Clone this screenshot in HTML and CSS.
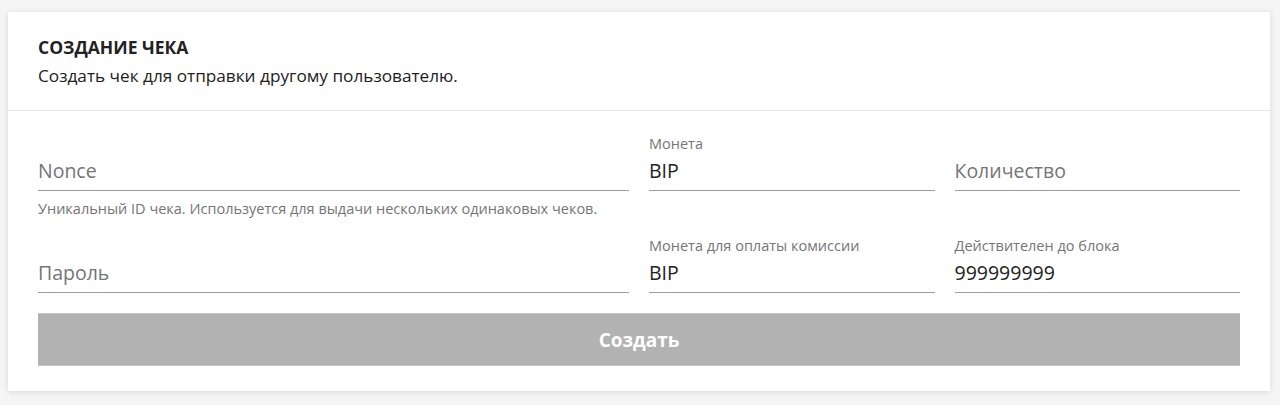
FILE: index.html
```html
<!DOCTYPE html>
<html lang="ru">
<head>
<meta charset="utf-8">
<title>Создание чека</title>
<link rel="stylesheet" href="styles.css">
</head>
<body>
<div class="card">
  <div class="card-head">
    <h1 class="title">СОЗДАНИЕ ЧЕКА</h1>
    <p class="subtitle">Создать чек для отправки другому пользователю.</p>
  </div>
  <div class="card-body">
    <div class="cell">
      <div class="field">
        <div class="label"></div>
        <div class="input placeholder">Nonce</div>
      </div>
      <div class="help">Уникальный ID чека. Используется для выдачи нескольких одинаковых чеков.</div>
    </div>
    <div class="cell">
      <div class="field">
        <div class="label">Монета</div>
        <div class="input">BIP</div>
      </div>
    </div>
    <div class="cell">
      <div class="field">
        <div class="label"></div>
        <div class="input placeholder">Количество</div>
      </div>
    </div>
    <div class="cell">
      <div class="field">
        <div class="label"></div>
        <div class="input placeholder">Пароль</div>
      </div>
    </div>
    <div class="cell">
      <div class="field">
        <div class="label">Монета для оплаты комиссии</div>
        <div class="input">BIP</div>
      </div>
    </div>
    <div class="cell">
      <div class="field">
        <div class="label">Действителен до блока</div>
        <div class="input">999999999</div>
      </div>
    </div>
    <div class="cell cell-full">
      <button class="btn" type="button">Создать</button>
    </div>
  </div>
</div>
</body>
</html>
```
FILE: styles.css
```css
html, body {
  margin: 0;
  padding: 0;
}
body {
  background: #f5f5f5;
  font-family: "Open Sans", "Noto Sans", sans-serif;
  color: #222;
  padding: 12px 10px 13px 8px;
}
.card {
  background: #fff;
  box-shadow: 0 1px 6px rgba(0, 0, 0, 0.12);
}
.card-head {
  padding: 24px 30px 23px;
  border-bottom: 1px solid #e2e2e2;
}
.title {
  margin: 0;
  font-size: 17.5px;
  line-height: 22px;
  font-weight: 700;
  color: #222;
}
.subtitle {
  margin: 7px 0 0;
  font-size: 17.2px;
  line-height: 22px;
  color: #222;
}
.card-body {
  display: grid;
  grid-template-columns: 2fr 1fr 1fr;
  align-items: start;
  padding: 15px 20px 15px;
}
.cell {
  padding: 10px;
}
.cell-full {
  grid-column: 1 / -1;
}
.label {
  height: 16px;
  font-size: 14.5px;
  line-height: 16px;
  color: #757575;
  white-space: nowrap;
}
.input {
  height: 38px;
  line-height: 37px;
  font-size: 19.5px;
  color: #222;
  border-bottom: 1px solid #9e9e9e;
  white-space: nowrap;
}
.placeholder {
  color: #757575;
}
.help {
  margin-top: 9px;
  font-size: 14.5px;
  line-height: 18px;
  color: #757575;
  white-space: nowrap;
}
.btn {
  display: block;
  width: 100%;
  height: 53px;
  margin: 0;
  background: #b2b2b2;
  border: 0;
  border-top: 1px solid #c4c4c4;
  border-bottom: 1px solid #c4c4c4;
  color: #fff;
  font-family: inherit;
  font-size: 19px;
  font-weight: 700;
}
```
